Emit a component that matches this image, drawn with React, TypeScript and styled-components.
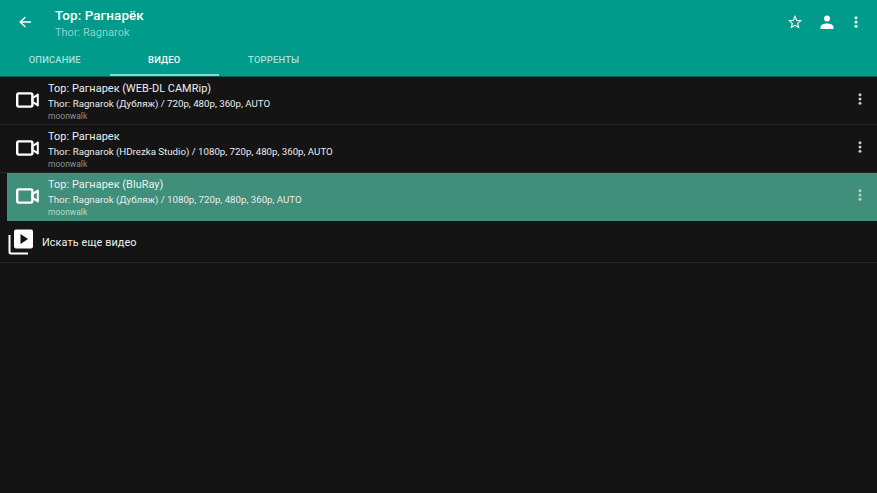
import React from "react";
import styled, { createGlobalStyle } from "styled-components";

const GlobalStyle = createGlobalStyle`
  html, body {
    margin: 0;
    padding: 0;
    background: #141414;
    font-family: Roboto, "Liberation Sans", sans-serif;
  }
`;

const Page = styled.div`
  width: 877px;
  height: 493px;
  overflow: hidden;
  background: #141414;
`;

const Header = styled.div`
  height: 76px;
  background: #009b8a;
  border-bottom: 1px solid #0b5f55;
  display: flex;
  flex-direction: column;
`;

const Toolbar = styled.div`
  height: 45px;
  box-sizing: border-box;
  padding-bottom: 2px;
  display: flex;
  align-items: center;
`;

const BackButton = styled.div`
  width: 55px;
  padding-left: 19px;
  box-sizing: border-box;
  display: flex;
  align-items: center;
  color: #fff;
`;

const Titles = styled.div`
  flex: 1;
  display: flex;
  flex-direction: column;
  padding-top: 4px;
`;

const Title = styled.div`
  font-size: 13.4px;
  line-height: 18px;
  font-weight: 500;
  color: #fff;
  letter-spacing: 0.1px;
`;

const Subtitle = styled.div`
  font-size: 11px;
  line-height: 15px;
  color: #8ad3c9;
`;

const Actions = styled.div`
  display: flex;
  align-items: center;
  gap: 18px;
  padding-right: 19px;
  color: #fff;
`;

const ActionMenu = styled.div`
  display: flex;
  margin-left: 2px;
`;

const Tabs = styled.div`
  flex: 1;
  display: flex;
`;

const Tab = styled.div<{ $active?: boolean }>`
  width: 109.5px;
  box-sizing: border-box;
  display: flex;
  align-items: center;
  justify-content: center;
  font-size: 9.4px;
  font-weight: 500;
  padding-bottom: 1px;
  letter-spacing: 0.2px;
  color: ${({ $active }) => ($active ? "#fff" : "#a6e0d8")};
  border-bottom: 2px solid ${({ $active }) => ($active ? "#7fe0d0" : "transparent")};
`;

const Row = styled.div<{ $selected?: boolean }>`
  height: 48px;
  box-sizing: border-box;
  margin-left: ${({ $selected }) => ($selected ? "7px" : "0")};
  padding-left: ${({ $selected }) => ($selected ? "9px" : "16px")};
  display: flex;
  align-items: center;
  background: ${({ $selected }) => ($selected ? "#3f8f7a" : "transparent")};
  border-bottom: 1px solid ${({ $selected }) => ($selected ? "#3f8f7a" : "#252525")};
`;

const RowIcon = styled.div`
  width: 32px;
  display: flex;
  margin-top: -1px;
  color: #fff;
`;

const RowText = styled.div`
  flex: 1;
  display: flex;
  flex-direction: column;
  padding-top: 2px;
`;

const RowTitle = styled.div`
  font-size: 10.9px;
  line-height: 15px;
  color: #f0f0f0;
  letter-spacing: 0.05px;
`;

const RowInfo = styled.div`
  font-size: 9.7px;
  line-height: 15px;
  font-weight: 400;
  color: #ececec;
`;

const RowSource = styled.div<{ $selected?: boolean }>`
  font-size: 8.5px;
  line-height: 11px;
  color: ${({ $selected }) => ($selected ? "#b5d6cc" : "#8f8f8f")};
`;

const RowMenu = styled.div`
  width: 16px;
  margin-right: 9px;
  margin-top: -3px;
  display: flex;
  justify-content: center;
  color: #c8c8c8;
`;

const SearchRow = styled.div`
  height: 42px;
  box-sizing: border-box;
  padding-left: 8px;
  display: flex;
  align-items: center;
  gap: 8px;
  border-bottom: 1px solid #252525;
`;

const SearchLabel = styled.div`
  font-size: 10.85px;
  color: #eee;
  letter-spacing: 0.1px;
  padding-top: 2px;
`;

const VideoIcon = () => (
  <svg width="23" height="16" viewBox="0 0 23 16" fill="none">
    <rect x="1.2" y="1.4" width="15.2" height="13.2" rx="1.6" stroke="currentColor" strokeWidth="2.4" />
    <path d="M16.5 6.3 21.8 2.6V13.4L16.5 9.7Z" stroke="currentColor" strokeWidth="2" strokeLinejoin="round" />
  </svg>
);

const DotsIcon = () => (
  <svg width="4" height="12" viewBox="0 0 4 12" fill="currentColor">
    <circle cx="2" cy="1.7" r="1.5" />
    <circle cx="2" cy="6" r="1.5" />
    <circle cx="2" cy="10.3" r="1.5" />
  </svg>
);

const rows = [
  { title: "Тор: Рагнарек (WEB-DL CAMRip)", info: "Thor: Ragnarok (Дубляж) / 720p, 480p, 360p, AUTO" },
  { title: "Тор: Рагнарек", info: "Thor: Ragnarok (HDrezka Studio) / 1080p, 720p, 480p, 360p, AUTO" },
  { title: "Тор: Рагнарек (BluRay)", info: "Thor: Ragnarok (Дубляж) / 1080p, 720p, 480p, 360p, AUTO", selected: true },
];

export default function App() {
  return (
    <Page>
      <GlobalStyle />
      <Header>
        <Toolbar>
          <BackButton>
            <svg width="12" height="12" viewBox="0 0 12 12" fill="none" stroke="currentColor" strokeWidth="1.4">
              <path d="M12 6H1.5M6.4 1 1.2 6 6.4 11" />
            </svg>
          </BackButton>
          <Titles>
            <Title>Тор: Рагнарёк</Title>
            <Subtitle>Thor: Ragnarok</Subtitle>
          </Titles>
          <Actions>
            <svg width="14" height="14" viewBox="0 0 24 24" fill="none" stroke="currentColor" strokeWidth="2">
              <path d="M12 2.5 14.9 9l7 .7-5.3 4.7 1.6 6.9L12 17.7l-6.2 3.6 1.6-6.9L2.1 9.7l7-.7Z" />
            </svg>
            <svg width="14" height="14" viewBox="0 0 14 14" fill="currentColor">
              <circle cx="7" cy="3.6" r="3" />
              <path d="M0.5 14V11.8C0.5 9.6 4.6 8.4 7 8.4S13.5 9.6 13.5 11.8V14Z" />
            </svg>
            <ActionMenu>
              <DotsIcon />
            </ActionMenu>
          </Actions>
        </Toolbar>
        <Tabs>
          <Tab>ОПИСАНИЕ</Tab>
          <Tab $active>ВИДЕО</Tab>
          <Tab>ТОРРЕНТЫ</Tab>
        </Tabs>
      </Header>
      {rows.map((row) => (
        <Row key={row.info} $selected={row.selected}>
          <RowIcon>
            <VideoIcon />
          </RowIcon>
          <RowText>
            <RowTitle>{row.title}</RowTitle>
            <RowInfo>{row.info}</RowInfo>
            <RowSource $selected={row.selected}>moonwalk</RowSource>
          </RowText>
          <RowMenu>
            <DotsIcon />
          </RowMenu>
        </Row>
      ))}
      <SearchRow>
        <svg width="26" height="26" viewBox="0 0 26 26" fill="none">
          <path d="M1.5 6V23C1.5 23.8 2.2 24.5 3 24.5H20" stroke="#fff" strokeWidth="2" />
          <rect x="6" y="0.5" width="19" height="19" rx="2" fill="#fff" />
          <path d="M12.5 5 20 10 12.5 15Z" fill="#141414" />
        </svg>
        <SearchLabel>Искать еще видео</SearchLabel>
      </SearchRow>
    </Page>
  );
}
